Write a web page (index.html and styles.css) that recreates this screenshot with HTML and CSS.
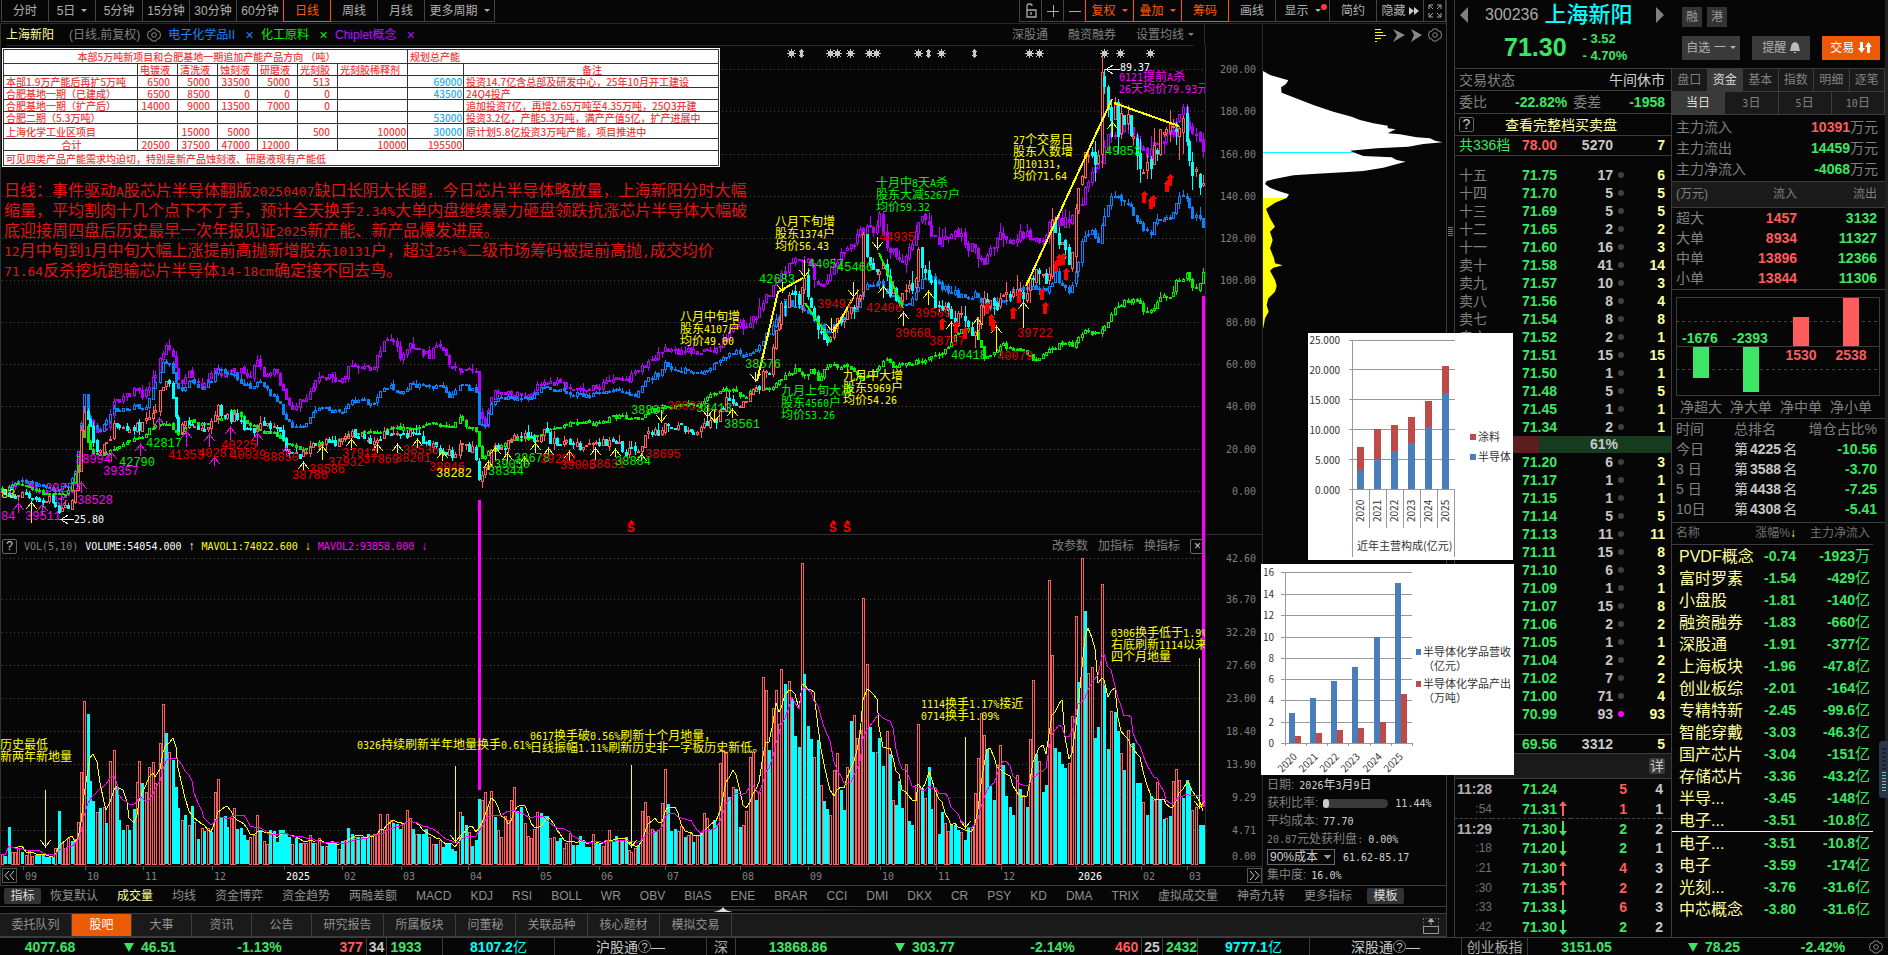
FILE: index.html
```html
<!DOCTYPE html>
<html lang="zh-CN">
<head>
<meta charset="utf-8">
<title>上海新阳 300236</title>
<link rel="stylesheet" href="styles.css">
</head>
<body>
<div class="app">
  <main class="workspace">
    <nav class="toolbar">
      <button class="tb">分时</button><button class="tb">5日<i class="caret"></i></button><button class="tb">5分钟</button><button class="tb">15分钟</button><button class="tb">30分钟</button><button class="tb">60分钟</button><button class="tb on">日线</button><button class="tb">周线</button><button class="tb">月线</button><button class="tb wide">更多周期<i class="caret"></i></button>
      <span class="grow"></span>
      <button class="tb ico edge" aria-label="锁定"><svg width="16" height="16" viewBox="0 0 16 16"><path d="M4 7V3q0-2 2-2h1q2 0 2 2M4 7h9v7H4zM8 9v3" fill="none" stroke="#aaa" stroke-width="1.3"/></svg></button>
      <button class="tb ico" aria-label="放大"><svg width="14" height="14"><path d="M1 7.500h12M7.500 1v12" stroke="#aaa"/></svg></button>
      <button class="tb ico" aria-label="缩小"><svg width="14" height="14"><path d="M1 7.500h12" stroke="#aaa"/></svg></button>
      <button class="tb on adj">复权<i class="caret"></i></button><button class="tb on adj">叠加<i class="caret"></i></button><button class="tb on">筹码</button><button class="tb">画线</button><button class="tb show">显示<i class="caret"></i><i class="reddot"></i></button><button class="tb">简约</button><button class="tb hide">隐藏<svg width="10" height="8"><path d="M0 0l5 4-5 4zM5 0l5 4-5 4z" fill="#ccc"/></svg></button>
      <button class="tb ico" aria-label="全屏"><svg width="14" height="14"><path d="M1 5V1h4M9 1h4v4M13 9v4H9M5 13H1V9M1 1l4 4M13 1L9 5M13 13L9 9M1 13l4-4" fill="none" stroke="#aaa"/></svg></button>
    </nav>

    <div class="charts">
      <section class="kline">
        <header class="title">
          <div class="title-in">
            <b class="sname">上海新阳</b><span class="mode">(日线,前复权)</span>
            <svg class="gear" width="14" height="14" viewBox="0 0 14 14"><use href="#gear"/></svg>
            <a href="#" class="blue">电子化学品II</a><button class="x blue">×</button>
            <a href="#" class="green">化工原料</a><button class="x green">×</button>
            <a href="#" class="purple">Chiplet概念</a><button class="x purple">×</button>
            <span class="grow"></span>
            <a href="#" class="dim">深股通</a><a href="#" class="dim">融资融券</a><button class="dim ma">设置均线<i class="caret"></i></button>
          </div>
          <div class="title-axis"></div>
        </header>
        <div class="plot">
          <svg id="chart" class="chart"></svg>
          <div class="volbar">
            <button class="box">?</button><span class="dim mix">VOL(5,10)</span><span class="white mix">VOLUME:54054.000</span><span class="white">↑</span><span class="yellow mix">MAVOL1:74022.600</span><span class="yellow">↓</span><span class="mag mix">MAVOL2:93858.000</span><span class="mag">↓</span>
            <span class="grow"></span><button>改参数</button><button>加指标</button><button>换指标</button><button class="box">×</button>
          </div>
          <div class="memo">
            <table class="capacity">
              <colgroup><col class="c1"><col class="c2"><col class="c2"><col class="c2"><col class="c2"><col class="c2"><col class="c3"><col class="c4"><col></colgroup>
              <tr class="head"><td colspan="7" class="mid">本部5万吨新项目和合肥基地一期追加产能产品方向 （吨）</td><td colspan="2">规划总产能</td></tr>
              <tr><td></td><td>电镀液</td><td>清洗液</td><td>蚀刻液</td><td>研磨液</td><td>光刻胶</td><td>光刻胶稀释剂</td><td></td><td class="mid">备注</td></tr>
              <tr><td>本部1.9万产能后再扩5万吨</td><td class="n">6500</td><td class="n">5000</td><td class="n">33500</td><td class="n">5000</td><td class="n">513</td><td></td><td class="t">69000</td><td>投资14.7亿含总部及研发中心，25年10月开工建设</td></tr>
              <tr><td>合肥基地一期（已建成）</td><td class="n">6500</td><td class="n">8500</td><td class="n">0</td><td class="n">0</td><td class="n">0</td><td></td><td class="t">43500</td><td>24Q4投产</td></tr>
              <tr><td>合肥基地一期（扩产后）</td><td class="n">14000</td><td class="n">9000</td><td class="n">13500</td><td class="n">7000</td><td class="n">0</td><td></td><td></td><td>追加投资7亿，再增2.65万吨至4.35万吨，25Q3开建</td></tr>
              <tr><td>合肥二期（5.3万吨）</td><td></td><td></td><td></td><td></td><td></td><td></td><td class="t">53000</td><td>投资3.2亿，产能5.3万吨，满产产值5亿，扩产进展中</td></tr>
              <tr class="tall"><td>上海化学工业区项目</td><td></td><td class="n">15000</td><td class="n">5000</td><td></td><td class="n">500</td><td class="r">10000</td><td class="t">30000</td><td>原计划5.8亿投资3万吨产能，项目推进中</td></tr>
              <tr><td class="mid">合计</td><td class="n">20500</td><td class="n">37500</td><td class="n">47000</td><td class="n">12000</td><td></td><td class="r">10000</td><td class="r">195500</td><td></td></tr>
              <tr class="tall"><td colspan="9">可见四类产品产能需求均迫切，特别是新产品蚀刻液、研磨液现有产能低</td></tr>
            </table>
            <p class="note mix">日线：事件驱动A股芯片半导体翻版20250407缺口长阴大长腿，今日芯片半导体略放量，上海新阳分时大幅<br>缩量，平均割肉十几个点下不了手，预计全天换手2.34%大单内盘继续暴力砸盘领跌抗涨芯片半导体大幅破<br>底迎接周四盘后历史最早一次年报见证2025新产能、新产品爆发进展。<br>12月中旬到1月中旬大幅上涨提前高抛新增股东10131户，超过25+%二级市场筹码被提前高抛,成交均价<br>71.64反杀挖坑跑输芯片半导体14-18cm确定接不回去鸟。</p>
          </div>
        </div>
      </section>
      <aside class="chips">
        <div class="chiptools">
          <svg width="70" height="16"><path d="M0 1.500h6M0 13.500h2M0 4.500h8M0 7.500h11M0 10.500h6" stroke="#ff0"/><path d="M18 1l12 6-12 7 4-7zM36 1l11 6-11 7 3-7z" fill="#888"/><g transform="translate(53 0)"><use href="#gear"/></g></svg>
        </div>
        <svg class="chipchart" id="chips"></svg>
        <div class="chipinfo">
          <div>日期: <em class="mix">2026年3月9日</em></div>
          <div>获利比率: <span class="bar"><i></i></span><em class="mix">11.44%</em></div>
          <div>平均成本: <em class="mix">77.70</em></div>
          <div><span class="mix">20.87元处获利盘:</span> <em class="mix">0.00%</em></div>
          <div><select aria-label="成本区间"><option>90%成本</option></select><em class="mix">61.62-85.17</em></div>
          <div>集中度: <em class="mix">16.0%</em></div>
        </div>
      </aside>
    </div>

    <nav class="indicators">
      <button class="chip">指标</button><button>恢复默认</button><button class="cur">成交量</button><button>均线</button><button>资金博弈</button><button>资金趋势</button><button>两融差额</button><button>MACD</button><button>KDJ</button><button>RSI</button><button>BOLL</button><button>WR</button><button>OBV</button><button>BIAS</button><button>ENE</button><button>BRAR</button><button>CCI</button><button>DMI</button><button>DKX</button><button>CR</button><button>PSY</button><button>KD</button><button>DMA</button><button>TRIX</button><button>虚拟成交量</button><button>神奇九转</button><button>更多指标</button><button class="chip tpl">模板</button>
    </nav>
    <div class="splitter"><svg width="20" height="5"><path d="M0 5q8-1 10-5q2 4 10 5z" fill="#ddd"/></svg></div>
    <nav class="tabs">
      <button class="w4">委托队列</button><button class="on">股吧</button><button>大事</button><button>资讯</button><button>公告</button><button class="w4">研究报告</button><button class="w4">所属板块</button><button>问董秘</button><button class="w4">关联品种</button><button class="w4">核心题材</button><button class="w4">模拟交易</button>
      <span class="grow"></span>
      <svg width="18" height="17"><path d="M1.500 9.500h15v7h-15zM9 8V3" fill="none" stroke="#999"/><path d="M5.500 5L9 1l3.500 4z" fill="#aaa"/><path d="M1 1.500h16M1.500 2v7M16.500 2v7" stroke="#777" stroke-dasharray="1 2"/></svg>
    </nav>
  </main>

  <div class="gutter"><i></i></div>

  <aside class="quote">
    <header class="qhead">
      <div class="ident">
        <div class="line1"><button class="tri l" aria-label="上一只"></button><span class="code">300236</span><b class="qname">上海新阳</b><button class="tri r" aria-label="下一只"></button></div>
        <div class="line2"><b class="last">71.30</b><span class="chg"><b>- 3.52</b><b>- 4.70%</b></span></div>
      </div>
      <div class="actions">
        <div><span class="tag">融</span><span class="tag">港</span></div>
        <div class="btns"><button>自选 一<i class="caret"></i></button><button>提醒 <svg width="10" height="11"><path d="M5 0q4 1 4 5l1 4H0l1-4q0-4 4-5zM4 10h2v1H4z" fill="#bbb"/></svg></button><button class="trade">交易 <svg width="14" height="11"><path d="M2 0h3v6h2l-3.500 5L0 6h2zM9 11h3V5h2l-3.500-5L7 5h2z" fill="#fff"/></svg></button></div>
      </div>
    </header>
    <div class="qbody">
      <section class="book">
        <div class="row h22"><span>交易状态</span><span class="lt">午间休市</span></div>
        <div class="row h23 wb"><span>委比</span><b class="gr">-22.82%</b><span>委差</span><b class="gr">-1958</b></div>
        <div class="row h22"><button class="box">?</button><a href="#" class="full">查看完整档买卖盘</a></div>
        <table class="lv top"><tbody><tr><td class="gr l">共336档</td><td class="p rd">78.00</td><td class="q">5270</td><td class="d"></td><td class="o">7</td></tr></tbody></table>
        <table class="lv asks" id="asks"></table>
        <div class="ratio"><i></i><b>61%</b></div>
        <table class="lv bids" id="bids"></table>
        <table class="lv low"><tbody><tr><td class="l"></td><td class="p">69.56</td><td class="q">3312</td><td class="d"></td><td class="o">5</td></tr></tbody></table>
        <div class="detail"><button>详</button></div>
        <table class="ticks" id="ticks"></table>
      </section>
      <section class="funds">
        <nav class="ftabs"><button>盘口</button><button class="on">资金</button><button>基本</button><button>指数</button><button>明细</button><button>逐笔</button></nav>
        <nav class="ftabs days"><button class="on">当日</button><button class="mix">3日</button><button class="mix">5日</button><button class="mix">10日</button></nav>
        <div class="flows"><div><span>主力流入</span><span class="rd"><b>10391</b><i>万元</i></span></div><div><span>主力流出</span><span class="gr"><b>14459</b><i>万元</i></span></div><div><span>主力净流入</span><span class="gr"><b>-4068</b><i>万元</i></span></div></div>
        <table class="sizes"><thead><tr><th>(万元)</th><th>流入</th><th>流出</th></tr></thead><tbody><tr><td>超大</td><td>1457</td><td>3132</td></tr><tr><td>大单</td><td>8934</td><td>11327</td></tr><tr><td>中单</td><td>13896</td><td>12366</td></tr><tr><td>小单</td><td>13844</td><td>11306</td></tr></tbody></table>
        <div class="netbars">
          <svg width="204" height="99"><path d="M.500.500h203v98H.500zM0 49.500h204" fill="none" stroke="#3c3c3c"/><path d="M0 24.500h204M0 72.500h204" stroke="#444" stroke-dasharray="3 3"/><path fill="#3ce664" d="M17 50h16v31H17zM67 50h16v45H67z"/><path fill="#ff5c5c" d="M117 20h16v29h-16zM167 1h16v48h-16z"/>
          <g class="nb"><text x="24" y="46" class="fg">-1676</text><text x="74" y="46" class="fg">-2393</text><text x="125" y="63" class="fr">1530</text><text x="175" y="63" class="fr">2538</text></g></svg>
          <div class="netlabels"><span>净超大</span><span>净大单</span><span>净中单</span><span>净小单</span></div>
        </div>
        <table class="ranks"><thead><tr><th>时间</th><th>总排名</th><th>增仓占比%</th></tr></thead><tbody><tr><td>今日</td><td>第<b>4225</b>名</td><td>-10.56</td></tr><tr><td>3 日</td><td>第<b>3588</b>名</td><td>-3.70</td></tr><tr><td>5 日</td><td>第<b>4438</b>名</td><td>-7.25</td></tr><tr><td>10日</td><td>第<b>4308</b>名</td><td>-5.41</td></tr></tbody></table>
        <table class="sectors"><thead><tr><th>名称</th><th>涨幅%<span class="arr">↓</span></th><th>主力净流入</th></tr></thead><tbody id="sectors"></tbody></table>
      </section>
    </div>
  </aside>

  <footer class="status">
    <b class="gr">4077.68</b><b class="gr"><i class="dn"></i>46.51</b><b class="gr">-1.13%</b>
    <span class="ud"><b class="rd">377</b><b class="flat">34</b><b class="gr">1933</b></span>
    <span class="cell cy"><b>8107.2</b>亿</span><span class="cell">沪股通<i class="q">?</i>—</span><span class="cell name">深</span>
    <b class="gr">13868.86</b><b class="gr"><i class="dn"></i>303.77</b><b class="gr">-2.14%</b>
    <span class="ud"><b class="rd">460</b><b class="flat">25</b><b class="gr">2432</b></span>
    <span class="cell cy"><b>9777.1</b>亿</span><span class="cell">深股通<i class="q">?</i>—</span><span class="cell name">创业板指</span>
    <b class="gr">3151.05</b><b class="gr"><i class="dn"></i>78.25</b><b class="gr">-2.42%</b>
    <svg width="14" height="14" viewBox="0 0 14 14"><use href="#gear"/></svg>
  </footer>

  <svg class="pic mixrev" id="revenue" width="205" height="227"></svg>
  <svg class="pic chem" id="chem" width="253" height="211"></svg>
  <div class="meterw"></div>
</div>
<svg width="0" height="0" class="defs"><defs><g id="gear"><path d="M5 1h4l1 2 2.500.300L13.500 7l-1 3.500L10 11l-1 2H5l-1-2-2.500-.500L.500 7l1-3.500L4 3z" fill="none" stroke="#888"/><circle cx="7" cy="7" r="2.300" fill="none" stroke="#888"/></g></defs></svg>
<script src="app.js"></script>
</body>
</html>
```

FILE: styles.css
```css
* { box-sizing: border-box; }
body { margin: 0; background: #060606; color: #808080; font: 12px/16px "Liberation Sans", "Noto Sans CJK SC", sans-serif; overflow: hidden; }
button { background: none; border: 0; padding: 0; margin: 0; color: inherit; font: inherit; white-space: nowrap; }
a { color: inherit; text-decoration: none; }
i, em { font-style: normal; }
table { border-collapse: collapse; border-spacing: 0; }
.hw { font-family: "DejaVu Sans Mono", monospace; font-size: 10px; line-height: 1; }
.grow { flex: 1; }
.defs { position: absolute; }
.caret { display: inline-block; border: 3px solid transparent; border-top-color: currentColor; border-bottom: 0; margin-left: 6px; vertical-align: 3px; }
.box { width: 15px; height: 15px; border: 1px solid #666; border-radius: 2px; line-height: 13px; text-align: center; color: #ccc; }
.gr { color: #3ce664; }
.rd { color: #ff5c5c; }
.cy { color: #00ffff; }
.white { color: #fff; }
.yellow { color: #ffff00; }
.mag { color: #ff00ff; }
.dim { color: #808080; }
.blue { color: #1e82ff; }
.green { color: #00f000; }
.purple { color: #b414ff; }

.app { position: relative; display: grid; grid-template-columns: minmax(0, 1fr) 7px 434px; grid-template-rows: minmax(0, 1fr) 18px; height: 100vh; min-height: 955px; }
.workspace { display: flex; flex-direction: column; min-width: 0; border-right: 1px solid #3c3c3c; }

.toolbar { display: flex; height: 24px; padding: 0 0 1px 1px; border-bottom: 1px solid #2a2a2a; color: #b0b0b0; }
.tb { width: 47px; height: 22px; border: 1px solid #444; border-width: 0 1px 1px 0; flex: none; }
.tb:first-child { border-left-width: 1px; width: 48px; }
.tb.wide { width: 70px; }
.tb.ico { width: 22px; display: flex; align-items: center; justify-content: center; }
.tb.edge { border-left-width: 1px; width: 23px; }
.tb.on { color: #ff5a00; border-color: #ff5a00; box-shadow: -1px 0 #ff5a00; position: relative; }
.tb.adj { width: 48px; }
.tb.show { width: 54px; position: relative; }
.tb.hide svg { margin-left: 3px; }
.reddot { position: absolute; right: 2px; top: 4px; width: 6px; height: 6px; border-radius: 3px; background: #ff3c3c; }

.charts { flex: 1; display: flex; min-height: 0; }
.kline { flex: 1; display: flex; flex-direction: column; min-width: 0; border-left: 1px solid #333; }
.title { display: flex; height: 22px; flex: none; }
.title-in { flex: 1; display: flex; align-items: center; gap: 7px; margin: 0 10px 0 5px; border-bottom: 1px solid #2a2a2a; }
.title-axis { width: 58px; border-left: 1px solid #2a2a2a; }
.sname { color: #ffffa0; font-weight: 400; }
.mode { margin-left: 8px; }
.x { font-size: 14px; width: 9px; margin-left: 3px; }
.title .dim { margin-left: 13px; }
.ma .caret { margin-left: 4px; }
.plot { flex: 1; position: relative; }
.chart { position: absolute; width: 100%; height: 100%; overflow: hidden; font: 12px "Noto Sans CJK SC", sans-serif; }
.chart .hw { font-size: 10px; }
.chart .num { font: 12px "Liberation Mono", monospace; }
.chart .div { font: 700 13px "Liberation Mono", monospace; }
.chart .axis { font: 10px "DejaVu Sans Mono", monospace; }
.volbar { position: absolute; left: 1px; right: 57px; top: 492px; height: 16px; display: flex; align-items: center; gap: 7px; }
.volbar .grow { min-width: 8px; }
.volbar button { margin-left: 3px; }
.volbar .box:first-child { margin-left: 0; }
.memo { position: absolute; left: 2px; top: 3px; }
.capacity { table-layout: fixed; width: 716px; background: #fff; color: #f03c3c; font: 500 10px/11px "Noto Sans CJK SC", sans-serif; outline: 1px solid #fff; }
.capacity td { border: 1px solid #333; height: 12px; padding: 0 0 0 2px; white-space: nowrap; }
.capacity .head td { height: 14px; }
.capacity .tall td { height: 15px; }
.capacity .mid { text-align: center; }
.capacity .n { text-align: right; padding-right: 7px; }
.capacity .r, .capacity .t { text-align: right; padding-right: 1px; }
.capacity .t { color: #28aaf0; }
.c1 { width: 134px; } .c2 { width: 40px; } .c3 { width: 70px; } .c4 { width: 56px; }
.note { margin: 13px 0 0 1px; color: #e11414; font: 16px/20px "Noto Sans CJK SC", sans-serif; white-space: nowrap; }
.note .hw { font-size: 13px; }

.chips { width: 184px; flex: none; display: flex; flex-direction: column; border-left: 1px solid #2a2a2a; }
.chiptools { height: 22px; padding-top: 4px; display: flex; justify-content: flex-end; padding-right: 1px; }
.chipchart { flex: 1; width: 100%; min-height: 0; }
.chipinfo { height: 109px; padding: 0 4px; }
.chipinfo > div { height: 18px; line-height: 18px; display: flex; align-items: center; gap: 5px; }
.chipinfo em { color: #d0d0d0; }
.chipinfo .bar { width: 65px; height: 9px; border-radius: 5px; background: #3a3a3a; margin-right: 2px; }
.chipinfo .bar i { display: block; width: 6px; height: 9px; border-radius: 3px; background: #ccc; }
.chipinfo select { appearance: none; width: 68px; height: 16px; background: linear-gradient(#999, #999) 56px 5px / 7px 1px no-repeat, linear-gradient(#999, #999) 57px 6px / 5px 1px no-repeat, linear-gradient(#999, #999) 58px 7px / 3px 1px no-repeat, linear-gradient(#999, #999) 59px 8px / 1px 1px no-repeat #060606; color: #d0d0d0; border: 1px solid #666; border-radius: 0; font: inherit; line-height: 14px; padding: 0 0 0 2px; margin-right: 3px; }

.indicators { display: flex; align-items: center; gap: 19px; height: 22px; border-top: 1px solid #3c3c3c; border-bottom: 1px solid #3c3c3c; padding-left: 4px; color: #909090; overflow: hidden; flex: none; }
.indicators button { flex: none; }
.indicators .chip { width: 37px; height: 16px; background: #333; border-radius: 2px; color: #ddd; margin-right: -10px; }
.indicators .tpl { margin-left: -4px; }
.indicators .cur { color: #ffffa0; }
.splitter { height: 7px; flex: none; text-align: center; background: radial-gradient(ellipse at center, #555, #060606 20%); border-bottom: 1px solid #3c3c3c; display: flex; justify-content: center; }
.tabs { display: flex; align-items: center; height: 23px; flex: none; background: #1a1a1a; border-bottom: 1px solid #3c3c3c; padding-right: 6px; color: #909090; }
.tabs button { width: 60px; height: 22px; border-right: 1px solid #3c3c3c; }
.tabs .w4 { width: 72px; }
.tabs .on { background: #eb5a05; color: #fff; }

.gutter { display: flex; align-items: center; justify-content: center; }
.gutter i { width: 5px; height: 9px; background: repeating-linear-gradient(#777 0 1px, transparent 1px 2px); margin-bottom: 475px; }

.quote { border-left: 1px solid #3c3c3c; display: flex; flex-direction: column; min-width: 0; color: #808080; font-size: 14px; border-right: 3px solid #222; }
.qhead { display: flex; height: 68px; flex: none; }
.ident { width: 227px; }
.line1 { display: flex; align-items: center; height: 30px; padding-left: 5px; }
.tri { width: 0; height: 0; border: 8px solid transparent; }
.tri.l { border-right-color: #808080; border-left: 0; }
.tri.r { border-left-color: #808080; border-right: 0; margin-left: 24px; }
.code { color: #aaa; font-size: 16px; margin-left: 17px; }
.qname { color: #00ffff; font-size: 22px; font-weight: 500; margin-left: 6px; line-height: 28px; }
.line2 { display: flex; align-items: center; height: 34px; padding-left: 49px; color: #3ce664; }
.last { font-size: 25px; }
.chg { display: flex; flex-direction: column; margin-left: 16px; font-size: 13px; line-height: 17px; }
.actions { flex: 1; padding-top: 7px; }
.tag { display: inline-block; width: 20px; height: 20px; line-height: 20px; text-align: center; background: #333; color: #999; font-size: 12px; margin-right: 5px; vertical-align: top; }
.btns { display: flex; gap: 12px; margin-top: 9px; }
.btns button { width: 58px; height: 24px; background: #3a3a3a; color: #b0b0b0; font-size: 12px; }
.btns svg { vertical-align: -1px; }
.btns .caret { margin-left: 4px; }
.btns .trade { background: #eb5a05; color: #fff; }
.qbody { flex: 1; display: flex; border-top: 1px solid #3c3c3c; min-height: 0; }
.book { width: 217px; border-right: 1px solid #3c3c3c; flex: none; display: flex; flex-direction: column; }
.row { display: flex; align-items: center; justify-content: space-between; border-bottom: 1px solid #3c3c3c; padding: 0 6px 0 4px; flex: none; }
.h22 { height: 22px; } .h23 { height: 23px; }
.lt { color: #d0d0d0; }
.wb span + b, .wb b:last-child { margin-left: auto; }
.wb b + span { margin-left: 6px; }
.full { color: #ffffa0; margin-right: auto; margin-left: 31px; }
.lv { width: 100%; table-layout: fixed; flex: none; }
.lv td { height: 18px; padding: 0; line-height: 18px; font-weight: 700; white-space: nowrap; }
.lv .l { width: 67px; padding-left: 4px; font-weight: 400; }
.lv .p { width: 37px; color: #3ce664; }
.lv .p.rd { color: #ff5c5c; }
.lv .q { width: 54px; text-align: right; color: #c8c8c8; }
.lv .d { width: 13px; }
.lv .d i { display: block; width: 6px; height: 6px; border-radius: 3px; background: #404040; margin: 0 0 0 5px; }
.lv .d i.hot { background: #ff00ff; }
.lv .o { text-align: right; color: #ffffa0; padding-right: 6px; }
.top { border-bottom: 1px solid #3c3c3c; }
.top td { height: 19px; }
.asks { margin-top: 10px; }
.ratio { height: 17px; background: #153c1e; display: flex; position: relative; align-items: center; justify-content: center; color: #c8c8c8; flex: none; }
.ratio i { position: absolute; left: 0; top: 0; width: 39%; height: 100%; background: #5a1e1e; }
.ratio b { position: relative; padding-left: 82px; }
.low { border-top: 1px solid #3c3c3c; border-bottom: 1px solid #3c3c3c; margin-top: 11px; }
.detail { height: 25px; background: #1a1a1a; border-bottom: 1px solid #3c3c3c; display: flex; align-items: center; justify-content: flex-end; padding-right: 6px; flex: none; }
.detail button { width: 16px; height: 16px; line-height: 16px; background: #3a3a3a; color: #c8c8c8; border-radius: 2px; }
.ticks { flex: 1; width: 100%; table-layout: fixed; font-weight: 700; margin-top: 1px; }
.ticks tr { height: 19px; }
.ticks tbody { line-height: 18px; }
.ticks td { padding: 0; height: 19px; text-align: right; color: #c8c8c8; }
.ticks .tm { width: 37px; color: #b0b0b0; }
.ticks .tm.s { font-weight: 400; font-size: 12px; color: #707070; }
.ticks .tp { width: 65px; color: #3ce664; }
.ticks .ar { width: 14px; text-align: center; }
.ticks .ar svg { display: block; margin-left: 2px; }
.ticks .v { width: 56px; padding-right: 0; }
.ticks td:last-child { padding-right: 8px; }
.ticks .cut td { border-top: 1px dashed #444; }

.funds { flex: 1; min-width: 0; display: flex; flex-direction: column; }
.ftabs { display: flex; height: 23px; border-bottom: 1px solid #3c3c3c; background: #1a1a1a; font-size: 12px; flex: none; }
.ftabs button { flex: 1; border-right: 1px solid #3c3c3c; }
.ftabs .on { background: #3a3a3a; color: #ddd; }
.flows { height: 67px; border-bottom: 1px solid #3c3c3c; padding: 2px 7px 0 4px; flex: none; }
.flows div { display: flex; justify-content: space-between; height: 21px; line-height: 21px; }
.flows i { color: #808080; }
.sizes, .ranks, .sectors { width: 100%; table-layout: fixed; flex: none; }
.sizes th, .ranks th, .sectors th { font-weight: 400; padding: 0; }
.sizes th { height: 25px; background: #1a1a1a; border-bottom: 1px solid #3c3c3c; font-size: 12px; }
.sizes td { height: 20px; padding: 0; line-height: 20px; }
.sizes tr > *, .ranks tr > *, .sectors tr > * { text-align: right; }
.sizes tr > :first-child, .ranks tr > :first-child { text-align: left; padding-left: 4px; width: 56px; }
.sizes tr > :nth-child(2) { color: #ff5c5c; font-weight: 700; width: 69px; }
.sizes tr > :last-child { color: #3ce664; font-weight: 700; padding-right: 8px; }
.sizes thead th:nth-child(n) { color: #808080; font-weight: 400; }
.sizes { border-bottom: 1px solid #3c3c3c; }
.sizes tbody::after { content: ""; display: table-row; height: 2px; }
.netbars { height: 129px; padding: 7px 0 0 4px; border-bottom: 1px solid #3c3c3c; flex: none; }
.netbars svg { display: block; }
.nb { font: 700 14px "Liberation Sans", sans-serif; text-anchor: middle; }
.fg { fill: #3ce664; } .fr { fill: #ff5c5c; }
.netlabels { display: flex; width: 200px; line-height: 22px; }
.netlabels span { width: 50px; text-align: center; flex: none; }
.ranks td, .ranks th { height: 20px; padding: 0; line-height: 20px; }
.ranks { border-bottom: 1px solid #3c3c3c; }
.ranks tbody::after { content: ""; display: table-row; height: 3px; }
.ranks tr > :nth-child(2) { text-align: left; padding-left: 6px; width: 74px; }
.ranks td:nth-child(2) { color: #c8c8c8; white-space: nowrap; }
.ranks b { margin: 0 2px; }
.ranks td:last-child { color: #3ce664; font-weight: 700; }
.ranks tr > :last-child { padding-right: 8px; }
.sectors { width: calc(100% - 12px); }
.sectors th { height: 22px; border-bottom: 1px solid #3c3c3c; font-size: 12px; color: #707070; }
.sectors tr > :first-child { text-align: left; padding-left: 4px; width: 76px; }
.sectors tr > :nth-child(2) { width: 48px; white-space: nowrap; }
.sectors td { height: 22px; padding: 0; line-height: 21px; color: #3ce664; font-weight: 700; white-space: nowrap; }
.sectors td:first-child { color: #ffffa0; font: 400 16px/21px "Liberation Sans", "Noto Sans CJK SC", sans-serif; padding-left: 7px; }
.sectors td span { font-weight: 400; font-size: 15px; }
.sectors tr > :last-child { padding-right: 3px; }
.sectors .mark td { border-top: 1px solid #ffffa0; }
.arr { color: #ffffa0; }

.status { grid-column: 1 / -1; display: grid; grid-template-columns: 100fr 100fr 119fr 124fr 112fr 152fr 29fr 124fr 130fr 125fr 83fr 112fr 152fr 66fr 117fr 138fr 80fr 25fr; align-items: center; justify-items: center; font-size: 14px; line-height: 18px; color: #c8c8c8; border-top: 1px solid #3c3c3c; white-space: nowrap; overflow: hidden; }
.status > * { min-width: 0; }
.status .cell { border-right: 1px solid #3c3c3c; width: 100%; text-align: center; }
.status .name { color: #aaa; }
.status .ud { display: flex; width: 100%; border-right: 1px solid #3c3c3c; justify-content: center; gap: 3px; }
.status .flat { border: 1px solid #3c3c3c; border-width: 0 1px; padding: 0 2px; }
.dn { display: inline-block; border: 5px solid transparent; border-top: 9px solid #3ce664; border-bottom: 0; margin-right: 7px; }
.status .q { display: inline-block; width: 13px; height: 13px; border: 1px solid #888; border-radius: 7px; font-size: 11px; line-height: 12px; vertical-align: 1px; }

.pic { position: absolute; background: #fff; font: 11px "Noto Sans CJK SC", sans-serif; fill: #333; }
.mixrev { right: 375px; top: 333px; }
.chem { right: 374px; top: 564px; }
.pic .yr { font-size: 10px; }
.meterw { position: absolute; right: 0; top: 741px; width: 9px; height: 57px; border-radius: 3px 0 0 3px; background: repeating-linear-gradient(#6ec8aa 0 1px, transparent 1px 3px) 3px 31px / 4px 20px no-repeat, repeating-linear-gradient(transparent 0 2px, #1a2030 2px 4px) 3px 5px / 4px 26px no-repeat, #2c3448; }
```

FILE: app.js
```js
const NS = 'http://www.w3.org/2000/svg';
const BG = '#060606';

/* Wrap half-width runs so that they take half a full-width character. */
function mix(text) {
  return text.replace(/[!-~]+/g, m => '<span class="hw">' + m + '</span>');
}
document.querySelectorAll('.mix').forEach(el => {
  [...el.childNodes].filter(n => n.nodeType === 3).forEach(n => {
    const s = document.createElement('span');
    s.innerHTML = mix(n.data);
    n.replaceWith(s);
  });
});

function add(parent, tag, attrs, html) {
  const e = document.createElementNS(NS, tag);
  for (const k in attrs) e.setAttribute(k, attrs[k]);
  if (html !== undefined) e.innerHTML = html;
  parent.appendChild(e);
  return e;
}

/* ---------- daily bars: x, up/down, top of the volume bar ---------- */
const VOL_A = '5r522 13c527 23c441 30r515 38r517 46r503 55c515 64r525 72r512 80r527 89c525 97c523 106c526 115c530 123c530 131c530 138r505 146c393 154r490 162r505 170r475 178c483 186r478 194r427 201r277 210r63 218c102 225c303 232c362 242r397 250c384 258r382 265c430 275r243 283r210 290c320 297c420 307c450 315r435 322c450 333c387 340r307 347r243 354c310 364r335 372r262 380r247 387r310 397r190 405r73 412c159 420r217 430c240 437c320 444c384 452r420 461c405 470r435 477c378 484r427 494c477 502r445 509c453 518r445 526c455 535r337 542r297 551c411 559c408 566c441 574r414 583r384 591c447 599c444 607c465 616c480 623r470 631r465 639r405 648c450 656r482 664r492 672c450 681c453 689c486 697c450 705c450 712c462 720c470 727r492 737c474 746c488 754r490 762r490 771r465 779c488 785r490 793r474 802c498 811r498 820c490 826c484 834c490 843r507 852c484 859r480 867c444 875c462 883r470 891c470 900c471 907c475 915c463 922r465 930r462 939r462 947r403 955r450 964r403 972r420 979c429 988c432 996c447 1004r430 1012r390 1020r415 1028c447 1036r462 1044c462 1053c462 1061c447 1069r470 1077r492 1086c492 1095r480 1102c500 1110c488 1118c488 1126c507 1133c513 1144r397 1151c408 1159c435 1167r455 1175c498 1184c480 1191c357 1199r360 1208r337 1215r378 1223r333 1231c411 1240r450 1248r470 1256r408 1264r420 1273r360 1280r322 1288c393 1296c381 1306r430 1313r468 1321r475 1330r447 1337r397 1346c400 1354c408 1362c408 1370r475 1379r470 1387c483 1395c475 1403r505 1410r490 1418r460 1427c495 1435c495 1443c468 1451c480 1459c500 1467c500 1475r462 1484c490 1492c492 1500r497 1508r480 1517r450 1525c485 1533c468 1541r480 1549c482 1557c471 1565r510';
const VOL_B = '3r937 13r925 21c915 29r814 37r787 46r829 54r868 62c873 70r870 79r790 86r688 94c793 102c873 111c868 119r873 126r858 136c891 145r886 151r880 158c906 167r885 176c877 184r820 191r835 200c868 208c840 215c855 223r670 232r630 239r640 247c772 256r742 265c747 273c861 281r856 289r814 298r652 306r637 314c780 322r756 330r412 338r451 345c630 355r505 363r451 370r553 377r388 387c432 395r424 402c477 410c588 420c621 428r70 434c402 443c558 451c597 459r652 467c600 475r736 484c783 491c807 499r826 508r690 516r640 524c750 532c810 541r680 549c543 557r526 564r595 573r570 581r175 589r373 597c561 605c636 614r637 621c595 629c678 639r573 646c643 654r781 662c795 670c723 678c804 686r673 694c843 703c855 711r736 718r553 726c745 735r775 743c682 750c807 760r745 768c882 776c816 784r848 792r873 800c852 808c855 816c870 825r877 833c900 841c861 850r860 858r760 865r655 873r520 880r586 889c627 897c738 905c780 913r676 922r616 929c675 937c768 946c801 954c825 962r706 970c747 979r765 987c801 995r598 1002r421 1011c642 1019r664 1027c756 1035c735 1044r121 1051r346 1059c625 1067c636 1076c672 1083c684 1092r670 1099r529 1109r229 1116c426 1124r55 1133c213 1141r400 1149r382 1157c594 1165c561 1174r133 1181c435 1189c627 1198r514 1206c516 1214c573 1222r640 1230c690 1239r571 1246r613 1253c609 1261c729 1270c729 1278r787 1287c825 1296c768 1303r780 1311r727 1318c780 1328c837 1335r835 1343c828 1352r724 1360r688 1367r721 1376c774 1386c720 1392c738 1399r811 1408r800 1418c855 1426c855';
const parse = (s, x0, base) => s.split(' ').map(t => {
  const m = t.match(/(\d+)([rc])(\d+)/);
  return { x: Math.round(x0 + m[1] / 2.489), up: m[2] === 'r', h: Math.round((base - m[3]) / 3) };
});
const bars = parse(VOL_A, 0, 552).concat(parse(VOL_B, 630, 972));

const PRICE = '5,490 10,498 18,495 28,493 40,498 52,500 58,510 66,508 72,503 78,475 80,440 83,410 88,420 92,440 98,450 104,440 108,445 113,420 120,430 130,428 140,425 150,415 156,405 162,390 166,380 170,385 174,400 178,430 185,420 190,425 200,430 210,425 218,410 225,418 235,418 245,428 253,432 258,425 265,425 275,425 280,435 285,446 292,452 300,455 308,455 312,446 322,440 335,442 345,436 353,433 362,437 372,445 380,436 392,430 400,438 405,435 412,432 420,438 430,444 440,450 450,452 455,455 462,440 470,450 475,448 478,480 482,476 487,466 492,448 505,448 515,435 525,435 535,438 545,430 550,440 560,445 570,440 580,447 590,445 600,442 610,440 617,445 628,452 638,448 648,434 660,432 665,424 672,428 680,428 690,430 698,430 703,424 715,422 725,402 733,400 740,408 750,395 758,390 765,370 770,370 775,340 782,305 788,295 795,300 800,310 803,270 812,310 818,325 822,338 828,338 835,322 842,315 850,310 860,290 863,240 867,250 873,270 880,265 888,285 897,300 905,298 910,285 915,290 918,250 922,270 928,275 935,300 942,310 950,310 955,320 962,312 968,325 975,330 980,315 985,300 995,310 1003,290 1010,298 1018,290 1025,305 1030,285 1040,265 1047,295 1052,225 1058,235 1063,245 1068,260 1074,245 1078,180 1082,165 1087,155 1093,150 1098,160 1100,95 1104,75 1108,110 1115,110 1118,125 1125,120 1132,125 1136,150 1140,165 1148,160 1152,165 1155,145 1160,140 1168,140 1175,125 1180,115 1186,140 1190,175 1195,160 1198,168 1203,190';
const PURPLE = '5,490 20,480 35,490 60,500 75,480 80,450 83,405 88,415 95,432 105,430 112,405 125,395 135,390 142,395 150,385 160,360 165,345 172,355 180,385 188,372 195,385 205,385 215,370 225,373 240,368 250,375 257,360 262,375 275,368 282,390 290,408 300,402 308,395 315,380 330,375 340,383 350,365 360,365 372,370 380,350 390,337 396,345 402,358 410,343 420,350 428,355 438,345 450,365 460,370 470,368 476,373 479,415 485,425 490,400 495,392 510,393 530,398 540,382 560,382 575,388 590,388 600,386 615,378 625,380 638,372 650,358 662,350 680,352 700,350 715,350 725,340 735,325 745,325 758,312 768,295 775,282 782,275 790,265 800,255 810,265 818,285 828,285 835,260 845,250 855,240 865,225 872,230 880,215 885,240 892,250 900,260 910,250 918,225 925,218 932,235 942,240 950,230 960,235 968,245 975,250 982,265 990,250 1000,235 1010,240 1020,232 1030,235 1040,240 1050,225 1060,220 1072,220 1080,205 1090,180 1100,165 1108,140 1115,140 1120,125 1130,120 1138,140 1148,155 1155,145 1165,140 1175,130 1183,110 1190,130 1197,140 1203,150';
const BLUE = '5,490 20,480 40,485 55,490 68,485 76,470 80,430 84,395 90,425 100,430 112,410 125,410 135,405 145,410 152,390 160,370 165,360 172,370 180,395 190,380 200,388 210,382 218,370 228,373 240,380 250,388 260,382 272,395 280,405 287,422 295,428 305,425 312,412 325,408 340,412 350,402 360,400 372,405 380,390 390,385 400,395 410,385 420,385 430,388 440,385 450,397 460,385 470,388 477,395 479,425 485,425 490,405 495,400 510,398 530,398 540,387 555,390 570,393 585,395 600,392 612,390 625,392 635,395 645,380 660,372 665,362 672,370 690,370 700,372 715,365 725,358 735,352 745,355 755,348 762,340 770,330 780,315 785,300 795,305 805,310 815,320 825,330 835,325 845,315 855,310 862,290 870,285 880,280 890,295 895,300 905,305 912,300 920,280 928,276 940,285 950,290 960,295 975,295 985,310 995,305 1005,300 1015,290 1025,290 1035,285 1045,290 1055,275 1065,285 1070,292 1078,265 1082,240 1090,230 1098,240 1105,208 1115,195 1120,198 1130,205 1138,222 1148,235 1155,222 1165,218 1172,215 1180,190 1187,200 1192,220 1200,215 1204,235';
const GREEN = '5,488 20,483 40,492 60,495 70,490 76,470 82,430 85,425 90,450 100,455 115,450 125,443 135,438 145,436 150,428 165,422 175,430 180,435 190,420 200,425 215,420 230,412 238,413 245,422 255,425 262,432 275,432 283,440 290,445 300,450 310,447 320,440 335,442 350,435 365,432 380,432 395,428 410,428 420,425 435,422 450,427 460,418 465,425 475,427 479,445 482,458 490,450 500,445 510,440 530,438 545,432 560,427 575,422 590,422 600,425 610,417 625,416 640,418 650,410 665,407 680,405 700,404 710,395 720,390 735,390 743,398 755,388 770,388 780,380 795,370 802,375 812,370 818,380 825,365 840,365 852,368 862,378 875,372 882,362 888,360 895,367 905,365 915,362 925,360 942,355 948,345 952,338 960,330 968,330 976,335 980,345 983,357 995,352 1000,344 1010,348 1020,350 1028,352 1037,362 1045,353 1057,346 1065,343 1075,344 1080,332 1095,332 1105,325 1115,308 1122,302 1135,298 1142,310 1152,308 1158,300 1170,295 1175,285 1180,276 1187,275 1192,290 1200,282 1204,270';

let seed = 7;
const rnd = () => (seed = (seed * 16807) % 2147483647) / 2147483647;

const svg = document.getElementById('chart');
const root = add(svg, 'g', { transform: 'translate(-1 -46)', 'shape-rendering': 'crispEdges' });

/* grid, frames and axes */
const priceY = [69, 111, 154, 196, 238, 280, 322, 364, 406, 449, 491];
const volAxis = [[558, '42.60'], [599, '36.70'], [632, '32.20'], [665, '27.60'], [698, '23.00'], [731, '18.40'], [764, '13.90'], [797, '9.29'], [830, '4.71']];
add(root, 'path', { d: priceY.concat(volAxis.map(v => v[0])).map(y => `M2 ${y}.5H1206`).join(''), stroke: '#4a4a4a', 'stroke-dasharray': '1 3' });
add(root, 'path', { d: 'M1 534.5H1262M1205.500 46V864M1 866.500H1262', stroke: '#2f2f2f', fill: 'none' });
const text = (x, y, str, fill, cls, anchor) => add(root, 'text', { x, y, fill, class: cls || '', 'text-anchor': anchor || 'start' }, str);
priceY.forEach((y, i) => text(1256, y + 4, (200 - i * 20).toFixed(2), '#808080', 'axis', 'end'));
volAxis.concat([[856, '0.00']]).forEach(v => text(1256, v[0] + 4, v[1], '#808080', 'axis', 'end'));
[[25, '09'], [87, '10'], [145, '11'], [214, '12'], [286, '2025'], [344, '02'], [403, '03'], [470, '04'], [540, '05'], [601, '06'], [667, '07'], [742, '08'], [810, '09'], [882, '10'], [938, '11'], [1003, '12'], [1078, '2026'], [1143, '02'], [1189, '03']].forEach(m => {
  text(m[0], 880, m[1], m[1].length > 2 ? '#fff' : '#808080', 'axis');
  add(root, 'path', { d: `M${m[0] - 2}.5 866v4`, stroke: '#555' });
});
add(root, 'path', { d: 'M2.500 868.500h14v14h-14zM1247.500 868.500h14v14h-14z', fill: 'none', stroke: '#555' });
add(root, 'path', { d: 'M9 871l-4 4.500 4 4.500M14 871l-4 4.500 4 4.500M1250 871l4 4.500-4 4.500M1255 871l4 4.500-4 4.500', fill: 'none', stroke: '#ccc', 'shape-rendering': 'auto' });

/* candles */
function candles(spec, upColor, downColor, vol) {
  const pts = spec.split(' ').map(p => p.split(',').map(Number));
  const at = x => {
    let i = 1;
    while (i < pts.length - 1 && pts[i][0] < x) i++;
    const [a, b] = [pts[i - 1], pts[i]];
    const t = Math.max(0, Math.min(1, (x - a[0]) / (b[0] - a[0])));
    return a[1] + (b[1] - a[1]) * t;
  };
  let wicks = { up: '', dn: '' }, up = '', dn = '', prev = at(bars[0].x);
  bars.forEach(b => {
    const amp = vol * (1 + Math.max(0, 450 - at(b.x)) / 140);
    const o = prev + (rnd() - .5) * amp * .6, c = at(b.x) + (rnd() - .5) * amp * 1.5;
    prev = c;
    const t = Math.round(Math.min(o, c)), h = Math.max(1, Math.round(Math.abs(o - c)));
    const w1 = Math.round(rnd() * rnd() * amp * 1.6), w2 = Math.round(rnd() * rnd() * amp * 1.6);
    const stick = `M${b.x}.5 ${t - w1}v${w1}M${b.x}.5 ${t + h}v${w2}`;
    if (c <= o) { wicks.up += stick; up += `M${b.x - 1}.5 ${t}.5h2v${h}h-2z`; }
    else { wicks.dn += stick; dn += `M${b.x - 1} ${t}h3v${h + 1}h-3z`; }
  });
  add(root, 'path', { d: wicks.up, stroke: upColor });
  add(root, 'path', { d: wicks.dn, stroke: downColor });
  add(root, 'path', { d: up, stroke: upColor, fill: BG });
  add(root, 'path', { d: dn, fill: downColor });
}
candles(PURPLE, '#b400ff', '#b400ff', 3);
candles(BLUE, '#0a82ff', '#0a82ff', 2);
candles(GREEN, '#00f000', '#00f000', 2);
candles(PRICE, '#ff5c5c', '#00ffff', 5);

/* volume */
add(root, 'path', { d: bars.filter(b => b.up).map(b => `M${b.x - 1}.5 ${864 - b.h}.5h2V864h-2z`).join(''), stroke: '#ff5c5c', fill: BG });
add(root, 'path', { d: bars.filter(b => !b.up).map(b => `M${b.x - 1} ${864 - b.h}h3V864h-3z`).join(''), fill: '#00ffff' });
const ma = n => bars.map((b, i) => {
  const s = bars.slice(Math.max(0, i - n + 1), i + 1);
  return b.x + ',' + (864 - s.reduce((a, v) => a + v.h, 0) / s.length).toFixed(0);
}).join(' ');
add(root, 'polyline', { points: ma(5), fill: 'none', stroke: '#ffff00' });
add(root, 'polyline', { points: ma(10), fill: 'none', stroke: '#ff00ff' });

/* drawn lines */
[['757,381 778,292 803,278', '#ff0'], ['805,303 831,341', '#0f0'], ['833,333 853,298', '#ff0'], ['879,253 903,308', '#0f0'], ['1026,286 1112,99', '#ff0'], ['1114,103 1179,126', '#ff0']]
  .forEach(l => add(root, 'polyline', { points: l[0], fill: 'none', stroke: l[1], 'stroke-width': 2 }));
add(root, 'path', { d: 'M478 500h3v290h-3zM1202 296h3v511h-3z', fill: '#ff00ff' });

/* arrows: x, tip, tail */
const arrow = (list, color) => add(root, 'path', {
  d: list.map(([x, tip, tail]) => {
    const s = tip < tail ? 1 : -1;
    return `M${x}.5 ${tip}V${tail}M${x - 5}.5 ${tip + 7 * s}L${x}.5 ${tip}L${x + 5}.5 ${tip + 7 * s}`;
  }).join(''), fill: 'none', stroke: color
});
arrow([[18, 503, 513], [42, 504, 516], [81, 482, 493], [111, 452, 462], [140, 444, 456], [159, 418, 430], [186, 431, 447], [209, 434, 447], [214, 457, 466], [230, 427, 440], [257, 433, 446], [286, 447, 457], [61, 507, 493]], '#ff00ff');
arrow([[31, 502, 523], [303, 462, 470], [322, 446, 460], [351, 439, 450], [377, 444, 453], [397, 444, 453], [417, 439, 448], [442, 451, 461], [488, 461, 470], [495, 447, 460], [507, 453, 463], [524, 457, 467], [535, 443, 453], [548, 448, 457], [569, 451, 461], [595, 448, 460], [615, 449, 457], [641, 454, 461], [732, 409, 418], [883, 286, 298], [903, 312, 326], [928, 291, 305], [951, 322, 343], [977, 318, 340], [996, 326, 352], [1023, 302, 328], [1112, 122, 137], [661, 422, 410], [707, 417, 405], [714, 422, 410], [755, 381, 372], [782, 292, 282], [831, 331, 318], [853, 297, 282], [804, 277, 260], [877, 249, 237], [45, 847, 790], [455, 842, 766], [631, 847, 765], [965, 828, 737], [1199, 808, 658]], '#ffff00');
add(root, 'path', { d: 'M61 519.500h13M68 515l-7 4.500 7 4.500M1106 69.500h14M1113 65l-7 4.500 7 4.500', fill: 'none', stroke: '#fff' });
add(root, 'path', {
  d: [[942, 324], [956, 327], [965, 333], [987, 308], [991, 320], [993, 325], [1013, 313], [1019, 297], [1042, 294], [1045, 308], [1056, 266], [1059, 260], [1063, 259], [1066, 274], [1144, 197], [1151, 203], [1153, 201], [1167, 186], [1170, 180]]
    .map(([x, y]) => `M${x} ${y - 6}l4 4h-2v8h-4v-8h-2z`).join(''), fill: '#f00'
});

/* event marks along the top, dividend marks at the foot */
add(root, 'path', {
  d: [791, 830, 837, 850, 869, 876, 918, 941, 1029, 1039, 1104, 1120, 1150].map(x => `M${x - 2} 51h5v5h-5zM${x - 4} 53h9v1h-9zM${x} 49h1v9h-1zM${x - 3} 50h1v1h-1zM${x + 3} 50h1v1h-1zM${x - 3} 56h1v1h-1zM${x + 3} 56h1v1h-1z`).join('')
    + [801, 928, 974].map(x => `M${x} 49h1v9h-1zM${x - 1} 50h3v7h-3zM${x - 2} 51h5v1h-5zM${x - 2} 55h5v1h-5z`).join(''), fill: '#c8c8c8'
});
[631, 833, 847].forEach(x => {
  text(x, 532, 'S', '#f00', 'div', 'middle');
  add(root, 'path', { d: `M${x} 520l-3 3h6z`, fill: '#f00' });
});

/* shareholder counts */
const R = '#e60000', G = '#00f000', Y = '#ffff00', M = '#ff00ff';
[[75, 463, '38994', M], [103, 475, '39357', M], [119, 466, '42790', G], [146, 447, '42817', G], [168, 459, '41353', R], [198, 457, '40287', R], [221, 449, '40225', R], [230, 459, '40039', R], [263, 461, '38850', R], [292, 479, '38786', R], [309, 473, '38586', R], [328, 466, '37932', R], [342, 457, '37912', R], [363, 463, '37869', R], [395, 462, '38201', R], [403, 454, '38535', R], [429, 471, '38046', R], [436, 477, '38282', Y], [77, 504, '38528', M], [45, 492, '39277', M], [25, 520, '39511', M], [1, 520, '84', M], [1, 498, '83', Y],
 [488, 475, '38344', G], [494, 468, '39050', G], [514, 462, '38678', G], [540, 463, '39282', R], [560, 469, '39005', R], [589, 468, '38631', R], [615, 465, '38884', G], [645, 458, '38695', R], [631, 414, '38837', G], [667, 410, '38037', R], [696, 412, '38413', G], [724, 428, '38561', G], [745, 368, '38576', G], [817, 308, '39497', R], [866, 312, '42406', R], [915, 317, '39509', R], [895, 337, '39668', R], [929, 345, '38737', R], [951, 359, '40418', G], [997, 360, '40079', R], [1017, 337, '39722', R], [759, 283, '42683', G], [808, 268, '44057', G], [837, 271, '45466', G], [879, 241, '44935', R], [1105, 155, '49853', G]]
  .forEach(l => text(l[0], l[1], l[2], l[3], 'num'));
text(74, 523, '25.80', '#fff', 'axis');
text(1120, 71, '89.37', '#fff', 'axis');

/* free notes: x, centre of the first line, colour, lines */
const tmix = s => s.replace(/[!-~]+/g, m => '<tspan class="hw">' + m + '</tspan>');
[[680, 317, Y, '八月中旬增|股东4107户|均价49.00'], [775, 222, Y, '八月下旬增|股东1374户|均价56.43'], [876, 183, G, '十月中8天A杀|股东大减5267户|均价59.32'], [781, 391, G, '九月上旬大减|股东4560户|均价53.26'], [843, 376, Y, '九月中大增|股东5969户|均价54.26'], [1013, 140, Y, '27个交易日|股东人数增|加10131，|均价71.64'],
 [0, 745, Y, '历史最低|新两年新地量'], [357, 745, Y, '0326持续刷新半年地量换手0.61%'], [530, 736, Y, '0617换手破0.56%刷新十个月地量，|日线振幅1.11%刷新历史非一字板历史新低。'], [921, 704, Y, '1114换手1.17%接近|0714换手1.09%']]
  .forEach(n => n[3].split('|').forEach((s, i) => text(n[0], n[1] + 4 + i * 12, tmix(s), n[2])));
const clip = add(svg, 'clipPath', { id: 'edge' });
add(clip, 'rect', { x: 0, y: 0, width: 1205, height: 900 });
const clipped = add(root, 'g', { 'clip-path': 'url(#edge)' });
[[1119, 77, M, '0121提前A杀|26天均价79.93元'], [1111, 633, Y, '0306换手低于1.9%|右底刷新1114以来|四个月地量']]
  .forEach(n => n[3].split('|').forEach((s, i) => add(clipped, 'text', { x: n[0], y: n[1] + 4 + i * 12, fill: n[2] }, tmix(s))));

/* ---------- cost distribution ---------- */
const chips = add(document.getElementById('chips'), 'g', { transform: 'translate(0 -46)' });
const poly = (s, fill) => add(chips, 'polygon', { fill, points: s.split(' ').map(p => { const [x, y] = p.split(','); return (x - 909) / 3 + ',' + y / 3; }).join(' ') });
poly('909,213 930,225 985,241 978,252 963,262 965,278 1000,292 1060,315 1120,335 1175,350 1200,360 1240,370 1283,377 1283,385 1307,388 1283,400 1320,403 1370,412 1410,415 1425,422 1448,427 1390,432 1345,440 1250,445 1170,452 1180,457 1210,468 1295,472 1310,480 1337,485 1300,495 1270,503 1210,513 1150,517 1070,521 1000,526 940,538 920,543 915,552 930,563 955,573 987,583 980,594 909,594', '#fff');
poly('909,594 980,594 945,608 918,627 930,655 945,680 930,695 938,720 930,745 942,775 945,790 968,796 940,803 930,812 945,840 950,858 945,875 925,895 920,915 926,935 915,955 910,983 909,983', '#ff0');
add(chips, 'path', { d: 'M0 152.500h90', stroke: '#0ff' });

/* ---------- pasted bar charts ---------- */
const rev = document.getElementById('revenue');
add(rev, 'path', { d: [7, 36, 66, 96, 126, 156].map(y => `M41 ${y}.5H147`).join('') + 'M44.500 7V224M146.500 156V224' + [61, 78, 95, 112, 129].map(x => `M${x}.5 156V195`).join(''), stroke: '#999', fill: 'none' });
['25.000', '20.000', '15.000', '10.000', '5.000', '0.000'].forEach((s, i) => add(rev, 'text', { x: 32, y: 11 + i * 30, 'text-anchor': 'end', class: 'yr' }, s));
[[52, 114, 137], [69, 96, 126], [86, 92, 118], [103, 84, 110], [120, 68, 94], [137, 33, 60]].forEach(([x, r, b], i) => {
  add(rev, 'path', { d: `M${x - 3} ${r}h7V${b}h-7z`, fill: '#be4b48' });
  add(rev, 'path', { d: `M${x - 3} ${b}h7V156h-7z`, fill: '#4a7ebb' });
  add(rev, 'text', { transform: `translate(${x + 4} 189) rotate(-90)`, class: 'yr' }, 2020 + i);
});
add(rev, 'text', { x: 49, y: 217 }, '近年主营构成(亿元)');
add(rev, 'path', { d: 'M162 101h6v6h-6z', fill: '#be4b48' });
add(rev, 'path', { d: 'M162 121h6v6h-6z', fill: '#4a7ebb' });
add(rev, 'text', { x: 170, y: 108 }, '涂料');
add(rev, 'text', { x: 170, y: 128 }, '半导体');

const chem = document.getElementById('chem');
const gy = [8, 30, 51, 73, 94, 115, 136, 158, 179];
add(chem, 'path', { d: gy.map(y => `M20 ${y}.5H151`).join('') + 'M24.500 8V182' + [45, 66, 87, 109, 130, 151].map(x => `M${x}.5 179v3`).join(''), stroke: '#999', fill: 'none' });
gy.forEach((y, i) => add(chem, 'text', { x: 13, y: y + 4, 'text-anchor': 'end', class: 'yr' }, 16 - i * 2));
[[31, 149, 172], [52, 134, 169], [73, 117, 166], [94, 103, 164], [116, 73, 158], [137, 19, 130]].forEach(([x, b, r], i) => {
  add(chem, 'path', { d: `M${x - 3} ${b}h6V179h-6z`, fill: '#4a7ebb' });
  add(chem, 'path', { d: `M${x + 3} ${r}h6V179h-6z`, fill: '#be4b48' });
  add(chem, 'text', { transform: `translate(${x - 10} 209) rotate(-45)`, class: 'yr' }, 2020 + i);
});
add(chem, 'path', { d: 'M155 85h5v6h-5z', fill: '#4a7ebb' });
add(chem, 'path', { d: 'M155 117h5v6h-5z', fill: '#be4b48' });
[[162, 92, '半导体化学品营收'], [162, 106, '（亿元）'], [162, 124, '半导体化学品产出'], [162, 138, '（万吨）']].forEach(t => add(chem, 'text', { x: t[0], y: t[1] }, t[2]));

/* ---------- order book, ticks, sectors ---------- */
const level = (r, i) => `<tr><td class="l">${r[3] || ''}</td><td class="p">${r[0]}</td><td class="q">${r[1]}</td><td class="d"><i${r[1] === 93 ? ' class="hot"' : ''}></i></td><td class="o">${r[2]}</td></tr>`;
document.getElementById('asks').innerHTML = [['71.75', 17, 6, '十五'], ['71.70', 5, 5, '十四'], ['71.69', 5, 5, '十三'], ['71.65', 2, 2, '十二'], ['71.60', 16, 3, '十一'], ['71.58', 41, 14, '卖十'], ['71.57', 10, 3, '卖九'], ['71.56', 8, 4, '卖八'], ['71.54', 8, 8, '卖七'], ['71.52', 2, 1, '卖六'], ['71.51', 15, 15], ['71.50', 1, 1], ['71.48', 5, 5], ['71.45', 1, 1], ['71.34', 2, 1]].map(level).join('');
document.getElementById('bids').innerHTML = [['71.20', 6, 3], ['71.17', 1, 1], ['71.15', 1, 1], ['71.14', 5, 5], ['71.13', 11, 11], ['71.11', 15, 8], ['71.10', 6, 3], ['71.09', 1, 1], ['71.07', 15, 8], ['71.06', 2, 2], ['71.05', 1, 1], ['71.04', 2, 2], ['71.02', 7, 2], ['71.00', 71, 4], ['70.99', 93, 93]].map(level).join('');
const upArrow = '<svg width="8" height="15"><path d="M4 0l4 5H5v10H3V5H0z" fill="#ff5c5c"/></svg>';
const dnArrow = '<svg width="8" height="15"><path d="M4 15l4-5H5V0H3v10H0z" fill="#3ce664"/></svg>';
document.getElementById('ticks').innerHTML = [['11:28', '71.24', '', 5, 4, 'rd'], [':54', '71.31', upArrow, 1, 1, 'rd'], ['11:29', '71.30', dnArrow, 2, 2, 'gr'], [':18', '71.20', dnArrow, 2, 1, 'gr'], [':21', '71.30', upArrow, 4, 3, 'rd'], [':30', '71.35', upArrow, 2, 2, 'rd'], [':33', '71.33', dnArrow, 6, 3, 'rd'], [':42', '71.30', dnArrow, 2, 2, 'gr']]
  .map((r, i) => `<tr${i === 2 ? ' class="cut"' : ''}><td class="tm${r[0][0] === ':' ? ' s' : ''}">${r[0]}</td><td class="tp">${r[1]}</td><td class="ar">${r[2]}</td><td class="v"><span class="${r[5]}">${r[3]}</span></td><td>${r[4]}</td></tr>`).join('');
document.getElementById('sectors').innerHTML = [['PVDF概念', '-0.74', '-1923万'], ['富时罗素', '-1.54', '-429亿'], ['小盘股', '-1.81', '-140亿'], ['融资融券', '-1.83', '-660亿'], ['深股通', '-1.91', '-377亿'], ['上海板块', '-1.96', '-47.8亿'], ['创业板综', '-2.01', '-164亿'], ['专精特新', '-2.45', '-99.6亿'], ['智能穿戴', '-3.03', '-46.3亿'], ['国产芯片', '-3.04', '-151亿'], ['存储芯片', '-3.36', '-43.2亿'], ['半导...', '-3.45', '-148亿'], ['电子...', '-3.51', '-10.8亿'], ['电子...', '-3.51', '-10.8亿'], ['电子', '-3.59', '-174亿'], ['光刻...', '-3.76', '-31.6亿'], ['中芯概念', '-3.80', '-31.6亿']]
  .map((r, i) => `<tr${i === 13 ? ' class="mark"' : ''}><td>${r[0]}</td><td>${r[1]}</td><td>${r[2].slice(0, -1)}<span>${r[2].slice(-1)}</span></td></tr>`).join('');
```
